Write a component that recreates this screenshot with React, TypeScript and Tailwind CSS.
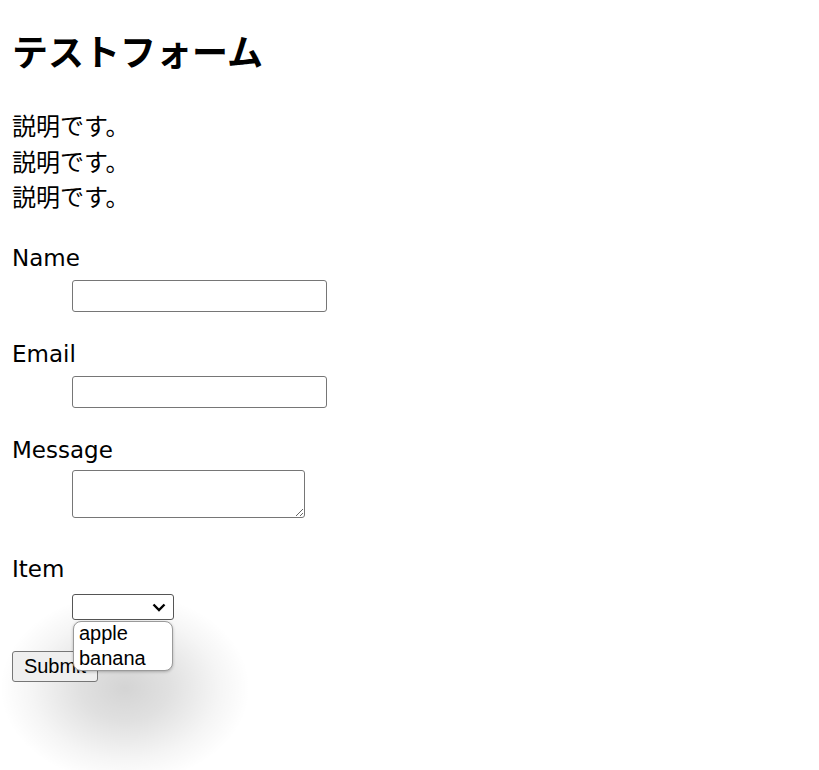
export default function App() {
  return (
    <div className="relative isolate min-h-[770px] bg-white px-[12px] text-black font-['DejaVu_Sans','Noto_Sans_CJK_JP',sans-serif]">
      {/* native dropdown shadow */}
      <div className="absolute left-[0px] top-[600px] -z-10 h-[170px] w-[260px] bg-[radial-gradient(ellipse_125px_95px_at_125px_88px,rgba(0,0,0,0.17),rgba(0,0,0,0.12)_35%,rgba(0,0,0,0.04)_75%,rgba(0,0,0,0)_100%)]" />

      <h1 className="pt-[30px] text-[36px] leading-[40px] font-bold font-['Noto_Sans_CJK_JP',sans-serif]">テストフォーム</h1>

      <p className="mt-[37px] text-[24px] leading-[35.5px] font-['Noto_Sans_CJK_JP',sans-serif]">
        説明です。
        <br />
        説明です。
        <br />
        説明です。
      </p>

      <form className="text-[23px] leading-[36px]">
        <dl>
          <dt className="mt-[26px]">Name</dt>
          <dd className="mt-[4px] ml-[60px]">
            <input type="text" className="block h-[32px] w-[255px] rounded-[3px] border border-[#767676] bg-white" />
          </dd>

          <dt className="mt-[24px]">Email</dt>
          <dd className="mt-[4px] ml-[60px]">
            <input type="email" className="block h-[32px] w-[255px] rounded-[3px] border border-[#767676] bg-white" />
          </dd>

          <dt className="mt-[24px]">Message</dt>
          <dd className="mt-[2px] ml-[60px]">
            <textarea className="block h-[48px] w-[233px] resize rounded-[3px] border border-[#767676] bg-white" />
          </dd>

          <dt className="mt-[33px]">Item</dt>
          <dd className="relative mt-[7px] ml-[60px]">
            <div className="relative h-[26px] w-[102px] rounded-[3px] border border-[#555] bg-white">
              <svg className="absolute right-[7px] top-[8px]" width="14" height="9" viewBox="0 0 14 9">
                <path d="M1.5 1.5 L7 7 L12.5 1.5" fill="none" stroke="#000" strokeWidth="2.4" />
              </svg>
            </div>
            <ul className="absolute left-[1px] top-[27px] z-10 h-[50px] w-[100px] rounded-[8px] border border-[#9a9a9a] bg-white shadow-[0_1px_3px_rgba(0,0,0,0.25)] font-['Liberation_Sans',sans-serif] text-[20px] leading-[25px]">
              <li className="pl-[5px] -mt-[1px]">apple</li>
              <li className="pl-[5px]">banana</li>
            </ul>
          </dd>
        </dl>

        <button
          type="button"
          className="mt-[31px] block h-[31px] w-[86px] rounded-[3px] border border-[#767676] bg-[#efefef] text-[20px] leading-[28px] font-['Liberation_Sans',sans-serif]"
        >
          Submit
        </button>
      </form>
    </div>
  );
}
